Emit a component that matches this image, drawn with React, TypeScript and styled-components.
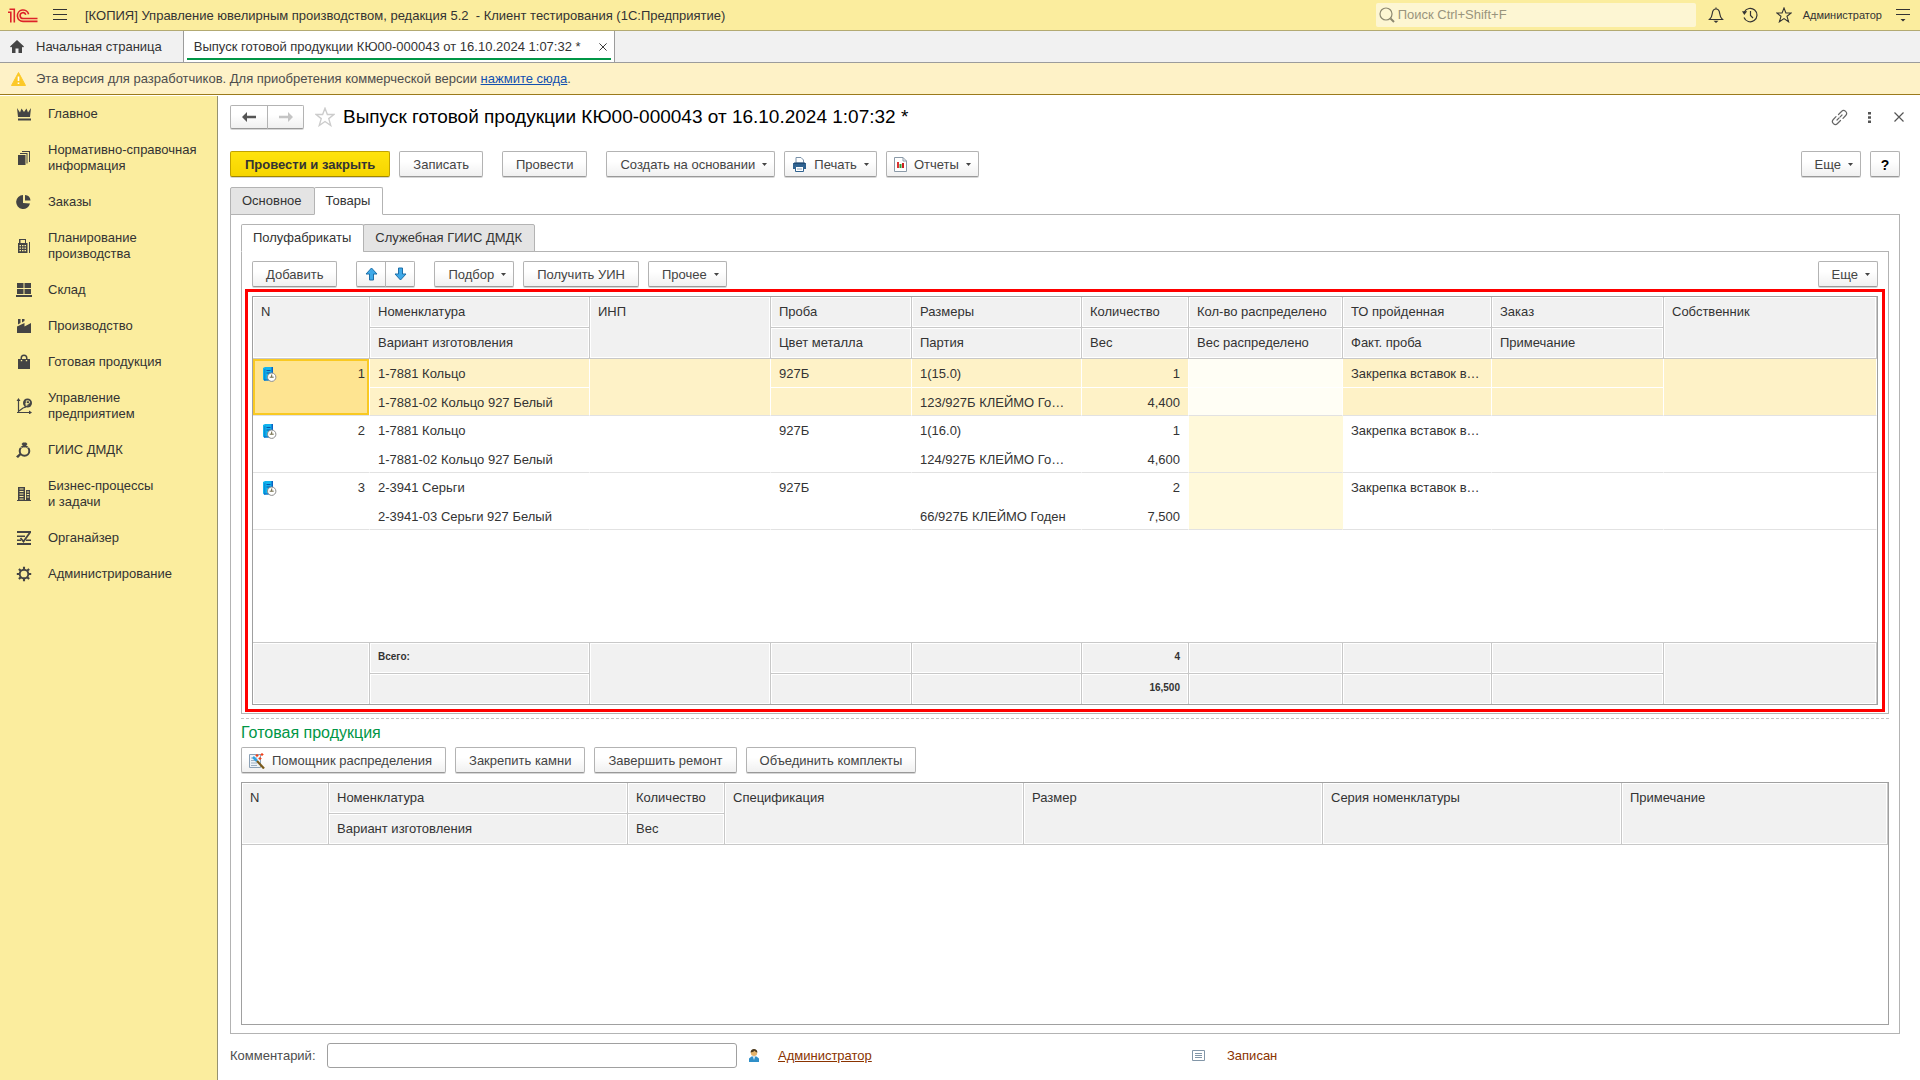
import React from "react";
import styled, { createGlobalStyle, css } from "styled-components";

const GlobalStyle = createGlobalStyle`
  *, *::before, *::after { box-sizing: border-box; }
  body { margin: 0; background: #fff; }
  body, button, input, table {
    font-family: "Liberation Sans", Arial, sans-serif;
    font-size: 13px;
    line-height: 16px;
    color: #333;
  }
`;

const Page = styled.div`
  display: flex;
  flex-direction: column;
  min-height: 100vh;
`;

/* ---------- top bar ---------- */

const TopBar = styled.header`
  display: flex;
  align-items: center;
  height: 31px;
  padding: 0 10px 0 8px;
  background: #fbed9e;
  border-bottom: 1px solid #b3aa72;
`;

const IconButton = styled.button`
  display: inline-flex;
  align-items: center;
  justify-content: center;
  padding: 0;
  border: 0;
  background: none;
  color: #333;
  cursor: pointer;
`;

const MenuButton = styled(IconButton)`
  margin: 0 18px 0 15px;
`;

const AppTitle = styled.div`
  flex: 1;
  padding-top: 1px;
  white-space: pre;
`;

const SearchBox = styled.label`
  display: flex;
  align-items: center;
  gap: 3px;
  width: 320px;
  height: 24px;
  padding-left: 3px;
  background: #fdf6d3;
  border-radius: 2px;
  color: #8d8870;
`;

const SearchInput = styled.input`
  flex: 1;
  min-width: 0;
  padding: 0;
  border: 0;
  outline: 0;
  background: none;
  &::placeholder { color: #99947d; opacity: 1; }
`;

const TopActions = styled.div`
  display: flex;
  align-items: center;
  gap: 18px;
  margin: 0 11px 0 12px;
`;

const UserName = styled.a`
  margin-right: 14px;
  font-size: 11px;
  color: #333;
  text-decoration: none;
`;

/* ---------- window tabs ---------- */

const WindowTabs = styled.nav`
  display: flex;
  height: 32px;
  background: #f1f1f1;
  border-bottom: 1px solid #9c9c9c;
`;

const HomeTab = styled.button`
  display: flex;
  align-items: center;
  gap: 12px;
  padding: 0 21px 0 10px;
  border: 0;
  border-right: 1px solid #9c9c9c;
  background: none;
`;

const ActiveTab = styled.div`
  display: flex;
  width: 431px;
  padding: 0 3px 2px;
  border-right: 1px solid #9c9c9c;
  background: #fff;
`;

const ActiveTabInner = styled.div`
  display: flex;
  flex: 1;
  align-items: center;
  justify-content: space-between;
  padding: 4px 4px 0 7px;
  border-bottom: 2px solid #009646;
`;

/* ---------- banner ---------- */

const Banner = styled.div`
  display: flex;
  align-items: center;
  gap: 10px;
  height: 32px;
  padding-left: 11px;
  background: #fef2c7;
  border-bottom: 1px solid #9b7a1c;
  color: #4d4d4d;
`;

const BannerLink = styled.a`
  color: #1250b0;
`;

/* ---------- layout ---------- */

const Body = styled.div`
  display: flex;
  flex: 1;
  padding-top: 1px;
`;

const Sidebar = styled.nav`
  flex: 0 0 218px;
  background: #fbed9e;
  border-right: 1px solid #96926f;
`;

const SideItem = styled.a`
  display: flex;
  align-items: center;
  gap: 16px;
  padding: 10px 16px;
  color: #333;
  text-decoration: none;
  white-space: pre-line;
  svg { flex: none; }
`;

const Main = styled.main`
  display: flex;
  flex: 1;
  flex-direction: column;
  min-width: 0;
  padding: 9px 20px 12px 12px;
`;

const TitleRow = styled.div`
  display: flex;
  align-items: center;
  margin-bottom: 22px;
`;

const Title = styled.h1`
  flex: 1;
  margin: 0;
  font-size: 19px;
  line-height: 24px;
  font-weight: 400;
  color: #000;
`;

const FavoriteButton = styled(IconButton)`
  margin: 0 8px 0 11px;
`;

const WindowActions = styled.div`
  display: flex;
  align-items: center;
  gap: 10px;
  margin-right: -9px;
  ${IconButton} { width: 20px; }
`;

const buttonFace = css`
  border: 1px solid #b3b3b3;
  border-bottom-color: #999;
  border-radius: 2px;
  background: linear-gradient(#fff 40%, #f0f0f0);
  box-shadow: 0 1px 0 #d6d6d6;
  color: #444;
  cursor: pointer;
`;

const Button = styled.button<{ $primary?: boolean; $icon?: boolean }>`
  display: inline-flex;
  align-items: center;
  gap: 7px;
  height: 26px;
  padding: 1px 13px 0 ${(p) => (p.$icon ? 7 : 13)}px;
  white-space: nowrap;
  ${buttonFace}
  ${(p) =>
    p.$primary &&
    css`
      padding: 1px 14px 0;
      background: linear-gradient(#ffe30d, #f6d500);
      border-color: #c1a200;
      border-bottom-color: #a08700;
      color: #333;
      font-weight: 700;
    `}
`;

const MenuFace = styled(Button)`
  padding-right: 7px;
`;

const HelpButton = styled(Button)`
  justify-content: center;
  width: 30px;
  padding: 1px 0 0;
  color: #000;
  font-size: 14px;
  font-weight: 700;
`;

const Joined = styled.div<{ $h: number }>`
  display: inline-flex;
  height: ${(p) => p.$h}px;
`;

const JoinedButton = styled.button<{ $w: number }>`
  display: inline-flex;
  align-items: center;
  justify-content: center;
  width: ${(p) => p.$w}px;
  padding: 0;
  ${buttonFace}
  &:first-child { border-radius: 2px 0 0 2px; }
  &:last-child { border-radius: 0 2px 2px 0; margin-left: -1px; }
`;

const Toolbar = styled.div`
  display: flex;
  align-items: center;
  gap: 9px;
`;

const ToolGap = styled.span<{ $w?: number }>`
  flex: ${(p) => (p.$w === undefined ? "1" : `0 0 ${p.$w}px`)};
  margin-right: -9px;
`;

const Tabs = styled.div`
  display: flex;
  height: 28px;
  margin-bottom: -1px;
`;

const OuterTabs = styled(Tabs)`
  margin-top: 10px;
`;

const Tab = styled.button<{ $active?: boolean }>`
  padding: 0 12px 1px 11px;
  border: 1px solid #b3b3b3;
  border-bottom-color: ${(p) => (p.$active ? "#fff" : "#b3b3b3")};
  border-radius: 2px 2px 0 0;
  background: ${(p) => (p.$active ? "#fff" : "#e4e4e4")};
  z-index: 1;
  & + & { margin-left: -1px; }
`;

const Panel = styled.section<{ $grow?: boolean }>`
  display: flex;
  flex: ${(p) => (p.$grow ? "1" : "none")};
  flex-direction: column;
  padding: 9px 10px 8px;
  border: 1px solid #b3b3b3;
`;

/* ---------- tables ---------- */

const TableFrame = styled.div<{ $marked?: boolean; $grow?: boolean }>`
  flex: ${(p) => (p.$grow ? "1" : "none")};
  margin-top: 9px;
  border: 1px solid #a0a0a0;
  ${(p) => p.$marked && css`outline: 3px solid #f00; outline-offset: 4px;`}
`;

const Table = styled.table`
  width: 100%;
  table-layout: fixed;
  border-collapse: separate;
  border-spacing: 0;
`;

const Col = styled.col<{ $w?: number }>`
  width: ${(p) => (p.$w ? `${p.$w}px` : "auto")};
`;

const cellBase = css`
  overflow: hidden;
  padding: 0 8px;
  white-space: nowrap;
  text-align: left;
  font-weight: 400;
`;

const HeadCell = styled.th`
  ${cellBase}
  height: 31px;
  background: #f1f1f1;
  border: 0 solid #c8c8c8;
  border-width: 0 1px 1px 0;
  box-shadow: inset 0 0 0 1px #fff;
  &[rowspan] { padding-top: 7px; vertical-align: top; }
`;

const FootCell = styled.td<{ $last?: boolean; $right?: boolean }>`
  ${cellBase}
  height: ${(p) => (p.$last ? 30 : 31)}px;
  padding-bottom: 3px;
  background: #f1f1f1;
  border: 0 solid #c8c8c8;
  border-width: 0 1px ${(p) => (p.$last ? 0 : 1)}px 0;
  box-shadow: inset 0 0 0 1px #fff;
  font-size: 10px;
  font-weight: 700;
  text-align: ${(p) => (p.$right ? "right" : "left")};
`;

type CellProps = { $selected?: boolean; $end?: boolean; $right?: boolean; $tint?: boolean };

const cellFill = (p: CellProps) =>
  p.$selected ? (p.$tint ? "#fffef5" : "#fef2c7") : p.$tint ? "#fff9da" : "#fff";

const Cell = styled.td<CellProps>`
  ${cellBase}
  height: ${(p) => (p.$end ? 28 : 29)}px;
  padding-top: 2px;
  background: ${cellFill};
  text-align: ${(p) => (p.$right ? "right" : "left")};
  border: 0 solid;
  border-width: 0 1px 1px 0;
  border-right-color: ${(p) => (p.$selected ? "#fff" : cellFill(p))};
  border-bottom-color: ${(p) => (p.$end ? "#e2e2e2" : p.$selected ? "#fff" : cellFill(p))};
`;

const NumberCell = styled(Cell)`
  padding: 0 4px 0 10px;
  vertical-align: top;
  ${(p) =>
    p.$selected &&
    css`
      background: #fee491;
      box-shadow: inset 0 0 0 2px #f9c922;
    `}
`;

const NumberRow = styled.div`
  display: flex;
  align-items: center;
  justify-content: space-between;
  height: 30px;
`;

const Filler = styled.td`
  height: 113px;
  padding: 0;
  border-bottom: 1px solid #c8c8c8;
`;

const Splitter = styled.hr`
  width: 100%;
  margin: 4px 0;
  border: 0;
  border-top: 1px dashed #c4c4c4;
`;

const SectionTitle = styled.h2`
  margin: 0 0 4px;
  font-size: 16px;
  line-height: 20px;
  font-weight: 400;
  color: #009646;
`;

/* ---------- footer ---------- */

const FormFooter = styled.div`
  display: grid;
  grid-template-columns: 97px 410px 41px 414px 35px auto;
  align-items: center;
  margin-top: 9px;
  color: #4d4d4d;
`;

const CommentInput = styled.input`
  height: 25px;
  padding: 0 6px;
  border: 1px solid #a0a0a0;
  border-radius: 3px;
`;

const IconSlot = styled.span`
  display: flex;
  padding-left: 12px;
`;

const StateIconSlot = styled.span`
  display: flex;
`;

const UserLink = styled.a`
  color: #8a3300;
`;

const State = styled.span`
  color: #8a3300;
`;

/* ---------- icons ---------- */

const Logo = () => (
  <svg width="30" height="15" viewBox="0 0 30 15" fill="none" stroke="#dd2229" strokeWidth="1.6">
    <path d="M0 4.300H2.800V14.500" />
    <path d="M1.500 1.200H6.300V14.500" />
    <path d="M20.600 6.200A5.700 5.700 0 1 0 15 13.400H29.500" />
    <path d="M17.800 6.800A2.900 2.900 0 1 0 15 10.500H29.500" />
  </svg>
);

const Burger = () => (
  <svg width="14" height="12" viewBox="0 0 14 12" stroke="#333" strokeWidth="1">
    <path d="M0 .5H14M0 5.5H14M0 10.5H14" />
  </svg>
);

const SearchIcon = () => (
  <svg width="16" height="16" viewBox="0 0 16 16" fill="none" stroke="currentColor">
    <circle cx="7" cy="7" r="6" strokeWidth="1.2" />
    <path d="M11.5 11.5L15 15" strokeWidth="2" />
  </svg>
);

const Bell = () => (
  <svg width="16" height="16" viewBox="0 0 16 16" fill="none" stroke="#333" strokeWidth="1.2">
    <path d="M8 .5V2M1.5 12.5H14.5C12.5 10.5 12 9.500 11.700 6.500C11.400 3.500 10 2 8 2S4.600 3.500 4.300 6.500C4 9.500 3.500 10.500 1.500 12.500Z" />
    <path d="M5.500 13.800H10.500L8 16Z" fill="#333" stroke="none" />
  </svg>
);

const History = () => (
  <svg width="16" height="16" viewBox="0 0 16 16" fill="none" stroke="#333" strokeWidth="1.2">
    <path d="M2.300 5A6.700 6.700 0 1 1 2 10.500" />
    <path d="M0 4.200H5.200L2.300 8Z" fill="#333" stroke="none" />
    <path d="M8.500 4V8.500L11 11" />
  </svg>
);

const Star = ({ size = 16, color = "#333" }: { size?: number; color?: string }) => (
  <svg width={size} height={size} viewBox="0 0 16 16" fill="none" stroke={color} strokeWidth="1.1">
    <path d="M8 1L9.900 6H15.200L11 9.300L12.600 14.800L8 11.600L3.400 14.800L5 9.300L.8 6H6.100Z" />
  </svg>
);

const ServiceMenu = () => (
  <svg width="14" height="13" viewBox="0 0 14 13" fill="#333">
    <path d="M0 0H14V1H0ZM0 5H14V6H0ZM4.500 10H9.500L7 12.500Z" />
  </svg>
);

const Home = () => (
  <svg width="14" height="13" viewBox="0 0 14 13" fill="#444">
    <path d="M7 0L14 6.500L13 7.500L12 6.700V13H8.500V8.500H5.500V13H2V6.700L1 7.500L0 6.500Z" />
  </svg>
);

const Cross = ({ size, color }: { size: number; color: string }) => (
  <svg width={size} height={size} viewBox="0 0 10 10" fill="none" stroke={color} strokeWidth="1.2">
    <path d="M.5 .5L9.500 9.500M9.500 .5L.5 9.500" />
  </svg>
);

const Warning = () => (
  <svg width="15" height="14" viewBox="0 0 15 14">
    <path d="M7.500 .5L14.500 13.500H.5Z" fill="#fcc928" stroke="#fcc928" strokeLinejoin="round" />
    <path d="M6.700 4.500H8.300V9H6.700ZM6.700 10.500H8.300V12H6.700Z" fill="#fff" />
  </svg>
);

const Arrow = ({ color, flip }: { color: string; flip?: boolean }) => (
  <svg width="14" height="10" viewBox="0 0 14 10" fill={color}>
    <path d={flip ? "M14 5L9 0V3.700H0V6.300H9V10Z" : "M0 5L5 0V3.700H14V6.300H5V10Z"} />
  </svg>
);

const BlueArrow = ({ down }: { down?: boolean }) => (
  <svg width="13" height="14" viewBox="0 0 13 14" fill="#3fa9e8" stroke="#1d6fa8" strokeWidth="1">
    <path
      d={
        down
          ? "M6.500 13L1 7H4.500V1H8.500V7H12Z"
          : "M6.500 1L1 7H4.500V13H8.500V7H12Z"
      }
    />
  </svg>
);

const Caret = () => (
  <svg width="5" height="3" viewBox="0 0 5 3" fill="#444">
    <path d="M0 0H5L2.500 3Z" />
  </svg>
);

const Link = () => (
  <svg width="17" height="17" viewBox="0 0 17 17" fill="none" stroke="#666" strokeWidth="1.2" strokeLinecap="round">
    <path d="M7.500 5.500L10.500 2.500A2.900 2.900 0 0 1 14.700 6.500L12 9.300" />
    <path d="M9.500 11.500L6.500 14.500A2.900 2.900 0 0 1 2.300 10.500L5 7.700" />
    <path d="M6 11L11 6" strokeDasharray="3 1.500" />
  </svg>
);

const Dots = () => (
  <svg width="3" height="13" viewBox="0 0 3 13" fill="#555">
    <path d="M0 1H3V3.500H0ZM0 5.300H3V7.800H0ZM0 9.600H3V12.100H0Z" />
  </svg>
);

const Printer = () => (
  <svg width="15" height="15" viewBox="0 0 15 15">
    <path d="M4 .5H9L11.500 3V6H4Z" fill="#fff" stroke="#7890a8" />
    <path d="M1 6H14V12H1Z" fill="#2f6290" />
    <path d="M2 5.500H13V7H2Z" fill="#1e4a75" />
    <path d="M3.500 9.500H11.500V14.500H3.500Z" fill="#fff" stroke="#2f6290" />
    <path d="M5 12H10" stroke="#8aa4bd" />
  </svg>
);

const Report = () => (
  <svg width="13" height="15" viewBox="0 0 13 15">
    <path d="M.5 .5H9L12.500 4V14.500H.5Z" fill="#fff" stroke="#8b9aa8" />
    <path d="M9 .5V4H12.500" fill="none" stroke="#8b9aa8" />
    <path d="M3 5H5V11H3Z" fill="#d33" />
    <path d="M5.500 7H7.500V11H5.500Z" fill="#2a9d3a" />
    <path d="M8 6H10V11H8Z" fill="#c22" />
  </svg>
);

const Wand = () => (
  <svg width="16" height="16" viewBox="0 0 16 16">
    <path d="M.5 1.500H11.500V14.500H.5Z" fill="#eef3f8" stroke="#8ba0b5" />
    <path d="M2 5H8M2 7.500H8M2 10H8M2 12.500H8" stroke="#9db0c2" />
    <path d="M4 4L8 8" stroke="#2f9fe0" strokeWidth="2.500" />
    <path d="M8 8L15 15.500" stroke="#7a5a1a" strokeWidth="2.200" />
    <path d="M8 1V4M6.500 2.500H9.500M13 0V3M11.500 1.500H14.500M11 4V7M9.500 5.500H12.500" stroke="#f0421c" strokeWidth="1.200" />
  </svg>
);

const DocClock = () => (
  <svg width="14" height="16" viewBox="0 0 14 16">
    <path d="M0 2L2 1H10V14.500H1L0 13.500Z" fill="#12b4ee" />
    <path d="M1 3.500L2.500 2.500V14.500H1Z" fill="#0a8fd8" />
    <path d="M8.500 1H10V14.500H1V13.500H8.500Z" fill="#0a62c4" />
    <path d="M3.500 4.500H7.500M3.500 7H7.500" stroke="#0a50a8" />
    <circle cx="8.700" cy="11.200" r="4.200" fill="#fff" stroke="#8a8a8a" />
    <path d="M8.700 8.500V11.200M6.700 11.200H10.700" stroke="#6b6440" fill="none" />
  </svg>
);

const Person = () => (
  <svg width="10" height="13" viewBox="0 0 10 13">
    <path d="M0 13V9.500L2.500 7.500H7.500L10 9.500V13Z" fill="#2f8fc8" />
    <path d="M4 7.500H6L5 11Z" fill="#fff" />
    <circle cx="5" cy="3.700" r="3.200" fill="#e5b36a" />
    <path d="M1.600 3.500C1.600 1.300 3 0 5 0S8.400 1.300 8.400 3.500C7 3 6 2.300 5.500 1.700C4.500 2.700 3 3.300 1.600 3.500Z" fill="#4a3a20" />
  </svg>
);

const StateIcon = () => (
  <svg width="13" height="11" viewBox="0 0 13 11" fill="#fff" stroke="#8296a8">
    <path d="M.5 .5H12.500V10.500H.5Z" />
    <path d="M3 3.500H10M3 5.500H10M3 7.500H10" />
  </svg>
);

const sideIcons: Record<string, React.ReactNode> = {
  crown: <path d="M1 2L4 6.500L5.500 2.500L8 6L10.500 2.500L12 6.500L15 2L14 11H2ZM2 12.500H15V14.500H2Z" />,
  books: <path d="M2 5H9.500V15H2ZM4 3H11.500V13.500H10.500V4H4ZM6 1H14V12H13V2H6Z" />,
  pie: <path d="M7 1V9L14 9.500A7 7 0 1 1 7 1ZM9 1A6 6 0 0 1 14.500 6.500H9Z" />,
  calc: (
    <path
      fillRule="evenodd"
      d="M2 5H3V1H10V5H11.500V15H2ZM4.500 2V5H9V2ZM3.500 7V8.300H5V7ZM6 7V8.300H7.500V7ZM8.500 7V8.300H10V7ZM3.500 9.500V10.800H5V9.500ZM6 9.500V10.800H7.500V9.500ZM8.500 9.500V10.800H10V9.500ZM3.500 12V13.300H5V12ZM6 12V13.300H7.500V12ZM8.500 12V13.300H10V12ZM13 4H14V15H13Z"
    />
  ),
  store: <path d="M1 1H7.500V6H1ZM8.500 1H15V6H8.500ZM1 7H7.500V12H1ZM8.500 7H15V12H8.500ZM0 13H16V15H0Z" />,
  factory: <path d="M2 1H4.500V5L2 6.500ZM6 1H8.500V3L6 4.500ZM1 8.500L8.500 5V8.500L15 5V15H1Z" />,
  bag: (
    <path
      fillRule="evenodd"
      d="M2 5H4.500V4A3.500 3.500 0 0 1 11.500 4V5H14V15H2ZM6 5H10V4A2 2 0 0 0 6 4ZM4.800 6V7.200H6.200V6ZM9.800 6V7.200H11.200V6Z"
    />
  ),
  graph: (
    <>
      <path d="M2.500 2V14M1 14.500H14M3 13L7 10L10 9" fill="none" stroke="#444" strokeWidth="1.200" />
      <path d="M2.500 0L4.500 3H.5ZM16 14.500L13 12.500V16.500Z" />
      <circle cx="11.500" cy="5" r="4.500" />
      <path d="M10.300 7.800V2.800H12.300A1.300 1.300 0 0 1 12.300 5.500H9.500M9.500 6.800H12.300" fill="none" stroke="#fbed9e" strokeWidth="0.900" />
    </>
  ),
  ring: (
    <>
      <circle cx="8.500" cy="9" r="4.800" fill="none" stroke="#444" strokeWidth="2" />
      <path d="M5.500 2L7 .5H10L11.500 2L8.500 5.500ZM0 14.500L4 11L5.500 12.500L2 16Z" />
      <path d="M4 4.500L5.500 6M13 4.500L11.500 6" stroke="#fbed9e" strokeWidth="1" />
    </>
  ),
  buildings: (
    <path
      fillRule="evenodd"
      d="M2 1H9V14H10V4H14V14H15V15H1V14H2ZM3.500 2.500V3.500H7.500V2.500ZM3.500 5V6H7.500V5ZM3.500 7.500V8.500H7.500V7.500ZM3.500 10V11H7.500V10ZM3.500 12.500V13.500H7.500V12.500ZM10.800 5.500V6.500H13.200V5.500ZM10.800 8V9H13.200V8ZM10.800 10.500V11.500H13.200V10.500Z"
    />
  ),
  organizer: (
    <>
      <path d="M1 1H15V3H1ZM1 5.500H9V7H1ZM1 9.500H5V11H1ZM10 9.500H15V11H10ZM1 13H15V15H1Z" />
      <path d="M4.500 8L7.500 11.500L14 2.500" fill="none" stroke="#444" strokeWidth="1.800" />
    </>
  ),
  gear: (
    <>
      <circle cx="8" cy="8" r="4.300" fill="none" stroke="#444" strokeWidth="1.900" />
      <path
        d="M8 .8V4M8 12V15.200M.8 8H4M12 8H15.200M2.900 2.900L5 5M11 11L13.100 13.100M2.900 13.100L5 11M11 5L13.100 2.900"
        stroke="#444"
        strokeWidth="2.100"
      />
    </>
  ),
};

const SideIcon = ({ name }: { name: string }) => (
  <svg width="16" height="16" viewBox="0 0 16 16" fill="#444">
    {sideIcons[name]}
  </svg>
);

/* ---------- data ---------- */

const sections: [string, string][] = [
  ["crown", "Главное"],
  ["books", "Нормативно-справочная\nинформация"],
  ["pie", "Заказы"],
  ["calc", "Планирование\nпроизводства"],
  ["store", "Склад"],
  ["factory", "Производство"],
  ["bag", "Готовая продукция"],
  ["graph", "Управление\nпредприятием"],
  ["ring", "ГИИС ДМДК"],
  ["buildings", "Бизнес-процессы\nи задачи"],
  ["organizer", "Органайзер"],
  ["gear", "Администрирование"],
];

type Column = { width?: number; top: string; bottom?: string };

const goodsColumns: Column[] = [
  { width: 117, top: "N" },
  { width: 220, top: "Номенклатура", bottom: "Вариант изготовления" },
  { width: 181, top: "ИНП" },
  { width: 141, top: "Проба", bottom: "Цвет металла" },
  { width: 170, top: "Размеры", bottom: "Партия" },
  { width: 107, top: "Количество", bottom: "Вес" },
  { width: 154, top: "Кол-во распределено", bottom: "Вес распределено" },
  { width: 149, top: "ТО пройденная", bottom: "Факт. проба" },
  { width: 172, top: "Заказ", bottom: "Примечание" },
  { top: "Собственник" },
];

const productColumns: Column[] = [
  { width: 87, top: "N" },
  { width: 299, top: "Номенклатура", bottom: "Вариант изготовления" },
  { width: 97, top: "Количество", bottom: "Вес" },
  { width: 299, top: "Спецификация" },
  { width: 299, top: "Размер" },
  { width: 299, top: "Серия номенклатуры" },
  { top: "Примечание" },
];

const goods = [
  { item: "1-7881 Кольцо", variant: "1-7881-02 Кольцо 927 Белый", size: "1(15.0)", batch: "123/927Б КЛЕЙМО Го…", qty: "1", weight: "4,400" },
  { item: "1-7881 Кольцо", variant: "1-7881-02 Кольцо 927 Белый", size: "1(16.0)", batch: "124/927Б КЛЕЙМО Го…", qty: "1", weight: "4,600" },
  { item: "2-3941 Серьги", variant: "2-3941-03 Серьги 927 Белый", size: "", batch: "66/927Б КЛЕЙМО Годен", qty: "2", weight: "7,500" },
];

const TableHead = ({ columns }: { columns: Column[] }) => (
  <>
    <colgroup>
      {columns.map((c) => (
        <Col key={c.top} $w={c.width} />
      ))}
    </colgroup>
    <thead>
      <tr>
        {columns.map((c) => (
          <HeadCell key={c.top} rowSpan={c.bottom ? undefined : 2}>
            {c.top}
          </HeadCell>
        ))}
      </tr>
      <tr>
        {columns.filter((c) => c.bottom).map((c) => (
          <HeadCell key={c.bottom}>{c.bottom}</HeadCell>
        ))}
      </tr>
    </thead>
  </>
);

const GoodsTable = () => (
  <Table>
    <TableHead columns={goodsColumns} />
    <tbody>
      {goods.map((g, i) => {
        const s = i === 0;
        return (
          <React.Fragment key={i}>
            <tr>
              <NumberCell rowSpan={2} $selected={s} $end>
                <NumberRow>
                  <DocClock />
                  {i + 1}
                </NumberRow>
              </NumberCell>
              <Cell $selected={s}>{g.item}</Cell>
              <Cell $selected={s} $end rowSpan={2} />
              <Cell $selected={s}>927Б</Cell>
              <Cell $selected={s}>{g.size}</Cell>
              <Cell $selected={s} $right>{g.qty}</Cell>
              <Cell $selected={s} $tint />
              <Cell $selected={s}>Закрепка вставок в…</Cell>
              <Cell $selected={s} />
              <Cell $selected={s} $end rowSpan={2} />
            </tr>
            <tr>
              <Cell $selected={s} $end>{g.variant}</Cell>
              <Cell $selected={s} $end />
              <Cell $selected={s} $end>{g.batch}</Cell>
              <Cell $selected={s} $end $right>{g.weight}</Cell>
              <Cell $selected={s} $end $tint />
              <Cell $selected={s} $end />
              <Cell $selected={s} $end />
            </tr>
          </React.Fragment>
        );
      })}
      <tr>
        <Filler colSpan={10} />
      </tr>
    </tbody>
    <tfoot>
      <tr>
        <FootCell rowSpan={2} $last />
        <FootCell>Всего:</FootCell>
        <FootCell rowSpan={2} $last />
        <FootCell />
        <FootCell />
        <FootCell $right>4</FootCell>
        <FootCell />
        <FootCell />
        <FootCell />
        <FootCell rowSpan={2} $last />
      </tr>
      <tr>
        <FootCell $last />
        <FootCell $last />
        <FootCell $last />
        <FootCell $last $right>16,500</FootCell>
        <FootCell $last />
        <FootCell $last />
        <FootCell $last />
      </tr>
    </tfoot>
  </Table>
);

export default function App() {
  return (
    <Page>
      <GlobalStyle />
      <TopBar>
        <Logo />
        <MenuButton aria-label="Меню"><Burger /></MenuButton>
        <AppTitle>{"[КОПИЯ] Управление ювелирным производством, редакция 5.2  - Клиент тестирования (1С:Предприятие)"}</AppTitle>
        <SearchBox>
          <SearchIcon />
          <SearchInput aria-label="Поиск" placeholder="Поиск Ctrl+Shift+F" />
        </SearchBox>
        <TopActions>
          <IconButton aria-label="Уведомления"><Bell /></IconButton>
          <IconButton aria-label="История"><History /></IconButton>
          <IconButton aria-label="Избранное"><Star /></IconButton>
        </TopActions>
        <UserName href="#user">Администратор</UserName>
        <IconButton aria-label="Сервис"><ServiceMenu /></IconButton>
      </TopBar>

      <WindowTabs>
        <HomeTab><Home />Начальная страница</HomeTab>
        <ActiveTab>
          <ActiveTabInner>
            Выпуск готовой продукции КЮ00-000043 от 16.10.2024 1:07:32 *
            <IconButton aria-label="Закрыть вкладку"><Cross size={8} color="#333" /></IconButton>
          </ActiveTabInner>
        </ActiveTab>
      </WindowTabs>

      <Banner>
        <Warning />
        <span>
          Эта версия для разработчиков. Для приобретения коммерческой версии{" "}
          <BannerLink href="#buy">нажмите сюда</BannerLink>.
        </span>
      </Banner>

      <Body>
        <Sidebar>
          {sections.map(([icon, label]) => (
            <SideItem key={icon} href={`#${icon}`}>
              <SideIcon name={icon} />
              {label}
            </SideItem>
          ))}
        </Sidebar>

        <Main>
          <TitleRow>
            <Joined $h={24}>
              <JoinedButton $w={38} aria-label="Назад"><Arrow color="#555" /></JoinedButton>
              <JoinedButton $w={37} aria-label="Вперед"><Arrow color="#c4c4c4" flip /></JoinedButton>
            </Joined>
            <FavoriteButton aria-label="В избранное"><Star size={20} color="#ccc" /></FavoriteButton>
            <Title>Выпуск готовой продукции КЮ00-000043 от 16.10.2024 1:07:32 *</Title>
            <WindowActions>
              <IconButton aria-label="Ссылка"><Link /></IconButton>
              <IconButton aria-label="Еще действия"><Dots /></IconButton>
              <IconButton aria-label="Закрыть"><Cross size={10} color="#555" /></IconButton>
            </WindowActions>
          </TitleRow>

          <Toolbar>
            <Button $primary>Провести и закрыть</Button>
            <Button>Записать</Button>
            <ToolGap $w={10} />
            <Button>Провести</Button>
            <ToolGap $w={10} />
            <MenuFace>Создать на основании<Caret /></MenuFace>
            <MenuFace $icon><Printer />Печать<Caret /></MenuFace>
            <MenuFace $icon><Report />Отчеты<Caret /></MenuFace>
            <ToolGap />
            <MenuFace>Еще<Caret /></MenuFace>
            <HelpButton>?</HelpButton>
          </Toolbar>

          <OuterTabs>
            <Tab>Основное</Tab>
            <Tab $active>Товары</Tab>
          </OuterTabs>
          <Panel $grow>
            <Tabs>
              <Tab $active>Полуфабрикаты</Tab>
              <Tab>Служебная ГИИС ДМДК</Tab>
            </Tabs>
            <Panel>
              <Toolbar>
                <Button>Добавить</Button>
                <ToolGap $w={10} />
                <Joined $h={26}>
                  <JoinedButton $w={30} aria-label="Вверх"><BlueArrow /></JoinedButton>
                  <JoinedButton $w={30} aria-label="Вниз"><BlueArrow down /></JoinedButton>
                </Joined>
                <ToolGap $w={10} />
                <MenuFace>Подбор<Caret /></MenuFace>
                <Button>Получить УИН</Button>
                <MenuFace>Прочее<Caret /></MenuFace>
                <ToolGap />
                <MenuFace>Еще<Caret /></MenuFace>
              </Toolbar>
              <TableFrame $marked>
                <GoodsTable />
              </TableFrame>
            </Panel>

            <Splitter />
            <SectionTitle>Готовая продукция</SectionTitle>
            <Toolbar>
              <Button $icon><Wand />Помощник распределения</Button>
              <Button>Закрепить камни</Button>
              <Button>Завершить ремонт</Button>
              <Button>Объединить комплекты</Button>
            </Toolbar>
            <TableFrame $grow>
              <Table>
                <TableHead columns={productColumns} />
              </Table>
            </TableFrame>
          </Panel>

          <FormFooter>
            <label htmlFor="comment">Комментарий:</label>
            <CommentInput id="comment" />
            <IconSlot><Person /></IconSlot>
            <span><UserLink href="#author">Администратор</UserLink></span>
            <StateIconSlot><StateIcon /></StateIconSlot>
            <State>Записан</State>
          </FormFooter>
        </Main>
      </Body>
    </Page>
  );
}
